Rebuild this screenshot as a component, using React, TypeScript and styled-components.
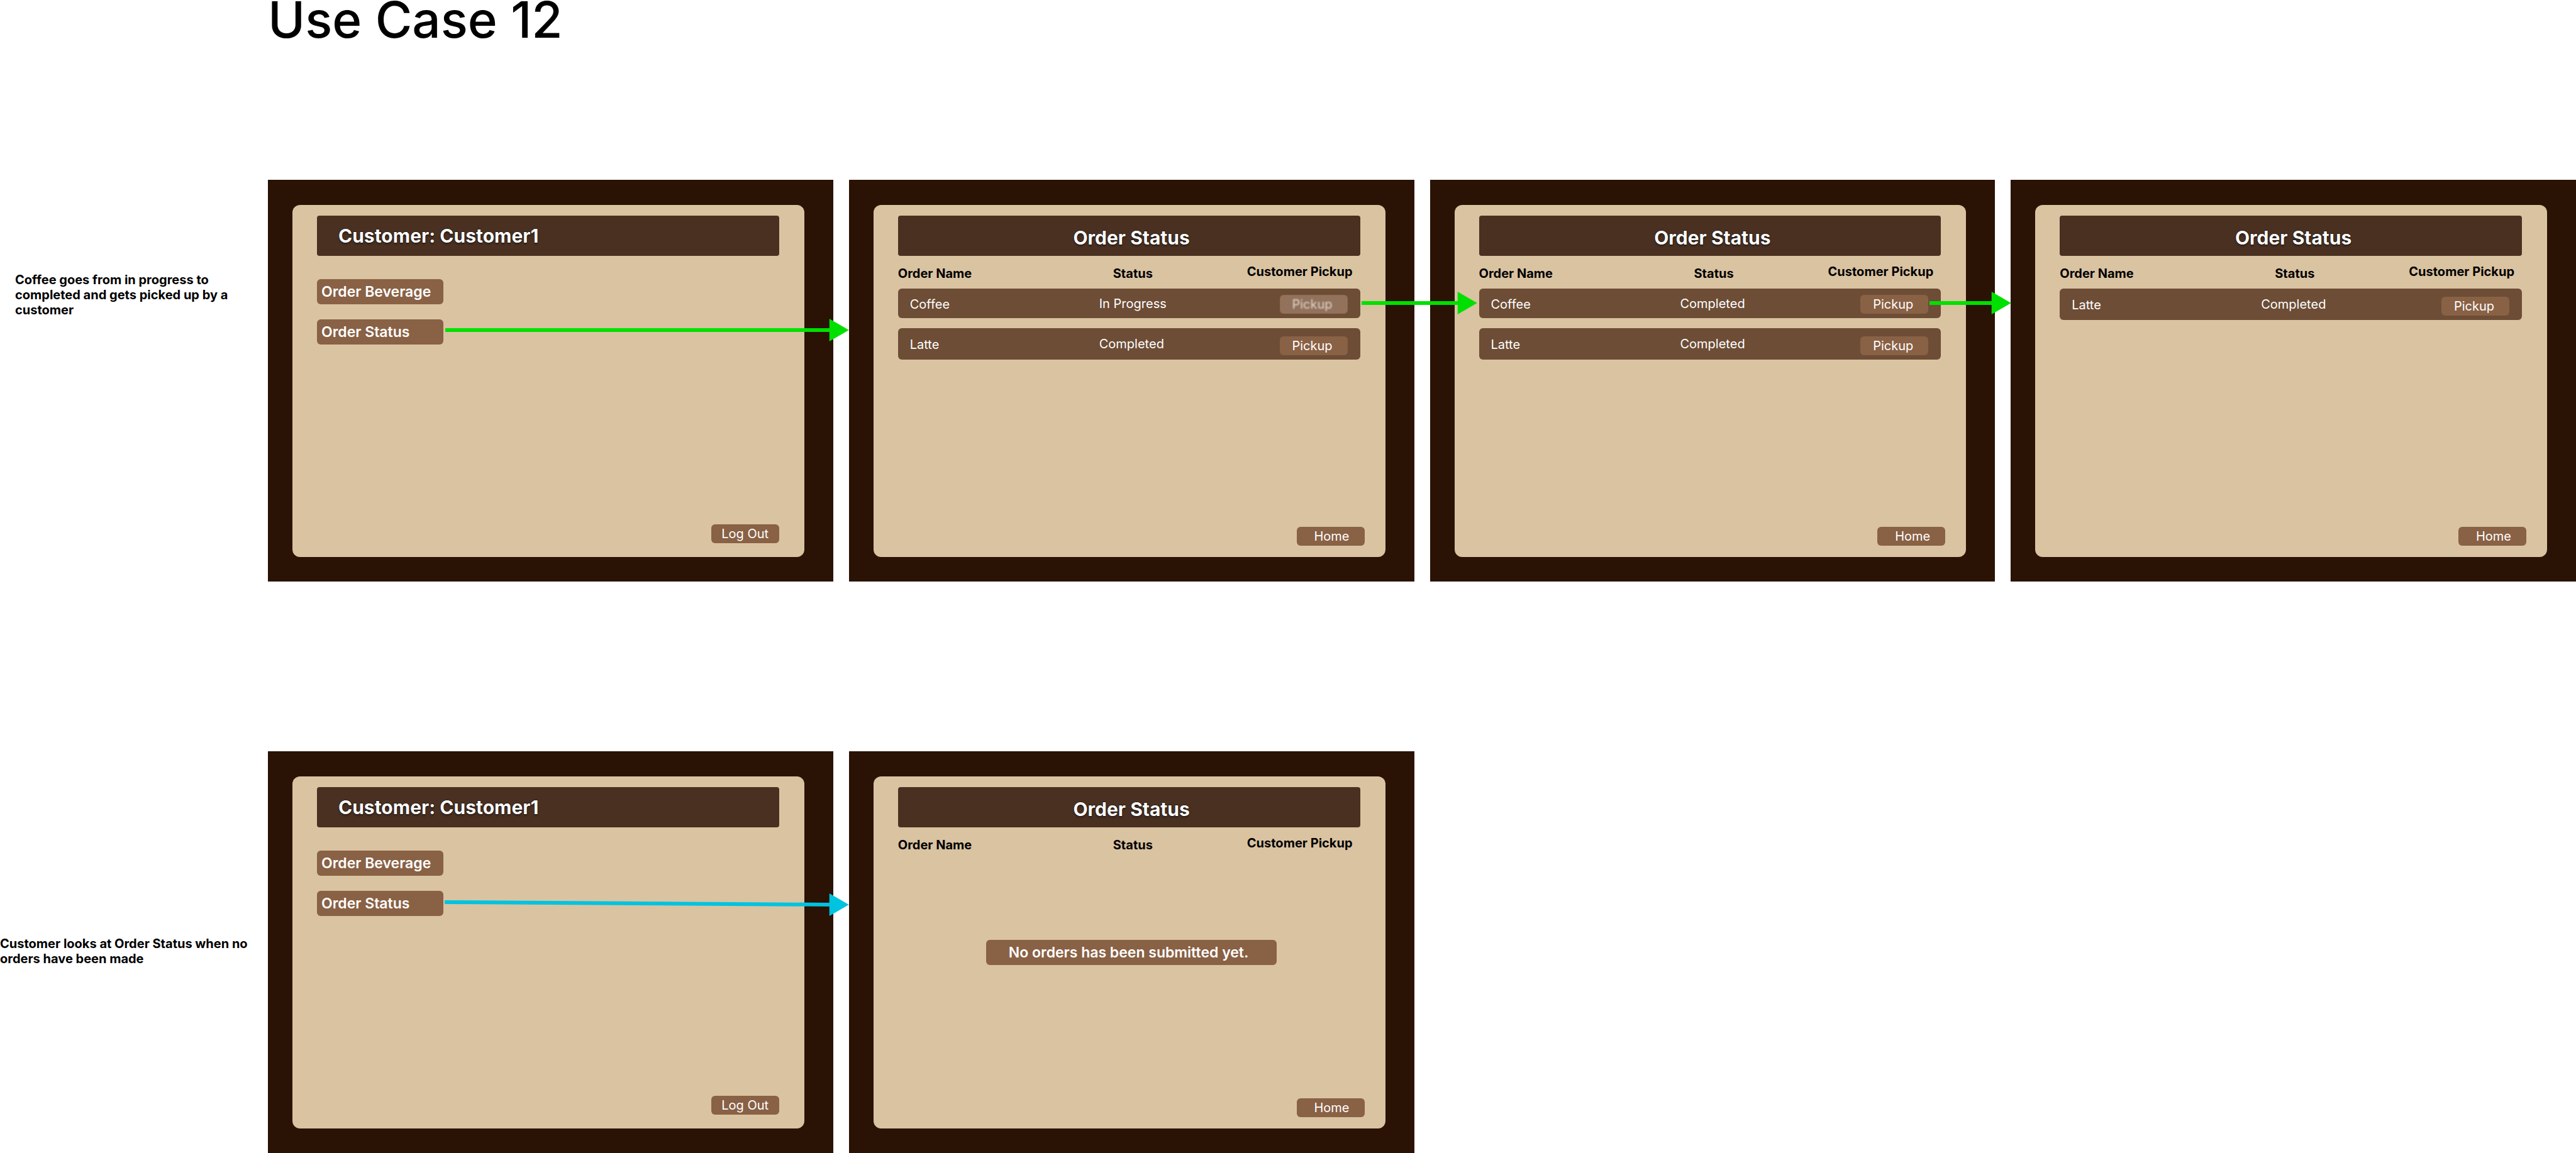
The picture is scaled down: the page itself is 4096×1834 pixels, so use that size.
import React from "react";
import styled, { createGlobalStyle } from "styled-components";

const color = {
  frame: "#2a1205",
  panel: "#dac3a1",
  banner: "#4a3021",
  row: "#6d4d36",
  button: "#896145",
  disabled: "#92725b",
  green: "#00e000",
  cyan: "#00c3e0",
};

const GlobalStyle = createGlobalStyle`
  *, *::before, *::after { box-sizing: border-box; }
  body {
    margin: 0;
    background: #fff;
    color: #000;
    font-family: Inter, "Liberation Sans", sans-serif;
    overflow-x: hidden;
  }
  h1, h2, p { margin: 0; }
  button { font-family: inherit; border: 0; cursor: pointer; }
`;

const Board = styled.main`
  display: flex;
  flex-direction: column;
`;

const BoardTitle = styled.h1`
  margin: 0 0 224px 426px;
  font-size: 80px;
  font-weight: 500;
  line-height: 62px;
`;

const Flows = styled.div`
  display: flex;
  flex-direction: column;
  gap: 270px;
`;

const Flow = styled.section`
  display: grid;
  grid-template-columns: 426px minmax(0, 1fr);
`;

const Note = styled.p<{ $top: number; $indent: number }>`
  padding: ${(p) => p.$top}px 16px 0 ${(p) => p.$indent}px;
  font-size: 20px;
  font-weight: 700;
  line-height: 24px;
`;

const Frames = styled.div`
  display: grid;
  grid-template-columns: repeat(4, minmax(0, 1fr));
  gap: 25px;
`;

const Frame = styled.article`
  position: relative;
  display: flex;
  padding: 40px 46px 39px 39px;
  background: ${color.frame};
`;

const Panel = styled.div`
  flex: 1;
  display: flex;
  flex-direction: column;
  min-height: 560px;
  border-radius: 12px;
  background: ${color.panel};
`;

const PanelBody = styled.div`
  padding: 17px 40px 0 39px;
`;

const Banner = styled.h2<{ $centered?: boolean }>`
  display: flex;
  align-items: center;
  justify-content: ${(p) => (p.$centered ? "center" : "flex-start")};
  height: 64px;
  padding: ${(p) => (p.$centered ? "6px 0 0 8px" : "0 34px")};
  border-radius: 4px;
  background: ${color.banner};
  color: #fff;
  font-size: 30px;
  font-weight: 700;
  line-height: 36px;
  -webkit-text-stroke: 1px #000;
  paint-order: stroke fill;
  text-shadow: 0 3px 3px rgba(0, 0, 0, 0.25);
`;

const Menu = styled.nav`
  display: flex;
  flex-direction: column;
  align-items: flex-start;
  gap: 24px;
  margin-top: 37px;
`;

const MenuButton = styled.button`
  width: 201px;
  height: 40px;
  padding: 0 7px;
  border-radius: 6px;
  background: ${color.button};
  color: #fff;
  font-size: 23px;
  font-weight: 600;
  text-align: left;
`;

const SmallButton = styled.button<{ $shift?: "left" | "right" }>`
  width: 108px;
  height: 30px;
  padding: 0;
  padding-right: ${(p) => (p.$shift === "left" ? 4 : 0)}px;
  padding-left: ${(p) => (p.$shift === "right" ? 4 : 0)}px;
  border-radius: 6px;
  background: ${color.button};
  color: #fff;
  font-size: 20px;
  font-weight: 400;
  line-height: 24px;

  &:disabled {
    background: ${color.disabled};
    box-shadow: inset 0 0 2px ${color.button};
    cursor: default;
  }
`;

const FadedLabel = styled.span`
  color: rgba(255, 255, 255, 0.7);
  filter: blur(1px);
`;

const Footer = styled.footer<{ $edge: "aligned" | "outer" }>`
  display: flex;
  justify-content: flex-end;
  margin-top: auto;
  padding: ${(p) => (p.$edge === "aligned" ? "0 40px 22px" : "0 33px 18px")};
`;

const OrderTable = styled.table`
  width: 100%;
  table-layout: fixed;
  border-collapse: separate;
  border-spacing: 0 16px;
`;

const HeadCell = styled.th<{ $width?: number }>`
  width: ${(p) => (p.$width ? `${p.$width}px` : "auto")};
  height: 20px;
  padding: 0;
  font-size: 20px;
  font-weight: 700;
  line-height: 16px;
  text-align: left;
  vertical-align: bottom;

  &:nth-child(2) {
    padding-left: 22px;
  }
  &:last-child {
    padding-right: 12px;
    line-height: 18px;
    text-align: right;
    vertical-align: top;
  }
`;

const OrderRow = styled.tr<{ $compact: boolean }>`
  height: ${(p) => (p.$compact ? 47 : 50)}px;
`;

const Cell = styled.td`
  padding: 0;
  background: ${color.row};
  color: #fff;
  font-size: 20px;
  line-height: 24px;

  &:first-child {
    padding: 2px 0 0 19px;
    border-radius: 6px 0 0 6px;
  }
  &:last-child {
    padding: 0 20px 7px 0;
    border-radius: 0 6px 6px 0;
    line-height: 0;
    text-align: right;
    vertical-align: bottom;
  }
`;

const EmptyMessage = styled.p`
  width: 462px;
  margin: 127px 0 0 140px;
  padding: 0 0 0 36px;
  border-radius: 6px;
  background: ${color.button};
  color: #fff;
  font-size: 23px;
  font-weight: 600;
  line-height: 40px;
`;

/* Connectors float above the frames and run into the next one. */
const ConnectorLayer = styled.div<{ $left: number; $top: number; $reach: number }>`
  position: absolute;
  z-index: 1;
  left: ${(p) => p.$left}px;
  right: ${(p) => -p.$reach}px;
  top: ${(p) => p.$top}px;
  height: 36px;
  padding-right: 20px;
  pointer-events: none;

  svg {
    display: block;
    overflow: visible;
  }
`;

type ConnectorProps = {
  left: number;
  top: number;
  reach: number;
  tint: string;
  drop?: number;
};

function Connector({ left, top, reach, tint, drop = 0 }: ConnectorProps) {
  return (
    <ConnectorLayer $left={left} $top={top} $reach={reach} aria-hidden="true">
      <svg width="100%" height="36">
        <line x1="0" y1="18" x2="100%" y2={18 + drop} stroke={tint} strokeWidth="6" />
        <svg x="100%" y={drop} width="20" height="36" overflow="visible">
          <path d="M-11 0 L20 18 L-11 36 Z" fill={tint} />
        </svg>
      </svg>
    </ConnectorLayer>
  );
}

function CustomerScreen({ children }: { children?: React.ReactNode }) {
  return (
    <Frame>
      <Panel>
        <PanelBody>
          <Banner>Customer: Customer1</Banner>
          <Menu>
            <MenuButton type="button">Order Beverage</MenuButton>
            <MenuButton type="button">Order Status</MenuButton>
          </Menu>
        </PanelBody>
        <Footer $edge="aligned">
          <SmallButton type="button">Log Out</SmallButton>
        </Footer>
      </Panel>
      {children}
    </Frame>
  );
}

type Order = { name: string; status: string };

function StatusScreen({ orders, children }: { orders: Order[]; children?: React.ReactNode }) {
  return (
    <Frame>
      <Panel>
        <PanelBody>
          <Banner $centered>Order Status</Banner>
          <OrderTable>
            <thead>
              <tr>
                <HeadCell $width={320}>Order Name</HeadCell>
                <HeadCell>Status</HeadCell>
                <HeadCell $width={200}>Customer Pickup</HeadCell>
              </tr>
            </thead>
            <tbody>
              {orders.map((order) => (
                <OrderRow key={order.name} $compact={order.name === "Coffee"}>
                  <Cell>{order.name}</Cell>
                  <Cell>{order.status}</Cell>
                  <Cell>
                    {order.status === "Completed" ? (
                      <SmallButton type="button" $shift="left">
                        Pickup
                      </SmallButton>
                    ) : (
                      <SmallButton type="button" $shift="left" disabled>
                        <FadedLabel>Pickup</FadedLabel>
                      </SmallButton>
                    )}
                  </Cell>
                </OrderRow>
              ))}
            </tbody>
          </OrderTable>
          {orders.length === 0 && <EmptyMessage>No orders has been submitted yet.</EmptyMessage>}
        </PanelBody>
        <Footer $edge="outer">
          <SmallButton type="button" $shift="right">
            Home
          </SmallButton>
        </Footer>
      </Panel>
      {children}
    </Frame>
  );
}

const latte: Order = { name: "Latte", status: "Completed" };

export default function App() {
  return (
    <>
      <GlobalStyle />
      <Board>
        <BoardTitle>Use Case 12</BoardTitle>
        <Flows>
          <Flow>
            <Note $top={147} $indent={24}>
              Coffee goes from in progress to completed and gets picked up by a customer
            </Note>
            <Frames>
              <CustomerScreen>
                <Connector left={282} top={221} reach={25} tint={color.green} />
              </CustomerScreen>
              <StatusScreen orders={[{ name: "Coffee", status: "In Progress" }, latte]}>
                <Connector left={815} top={178} reach={100} tint={color.green} />
              </StatusScreen>
              <StatusScreen orders={[{ name: "Coffee", status: "Completed" }, latte]}>
                <Connector left={794} top={178} reach={25} tint={color.green} />
              </StatusScreen>
              <StatusScreen orders={[latte]} />
            </Frames>
          </Flow>
          <Flow>
            <Note $top={294} $indent={0}>
              Customer looks at Order Status when no orders have been made
            </Note>
            <Frames>
              <CustomerScreen>
                <Connector left={281} top={222} reach={25} tint={color.cyan} drop={4} />
              </CustomerScreen>
              <StatusScreen orders={[]} />
            </Frames>
          </Flow>
        </Flows>
      </Board>
    </>
  );
}
